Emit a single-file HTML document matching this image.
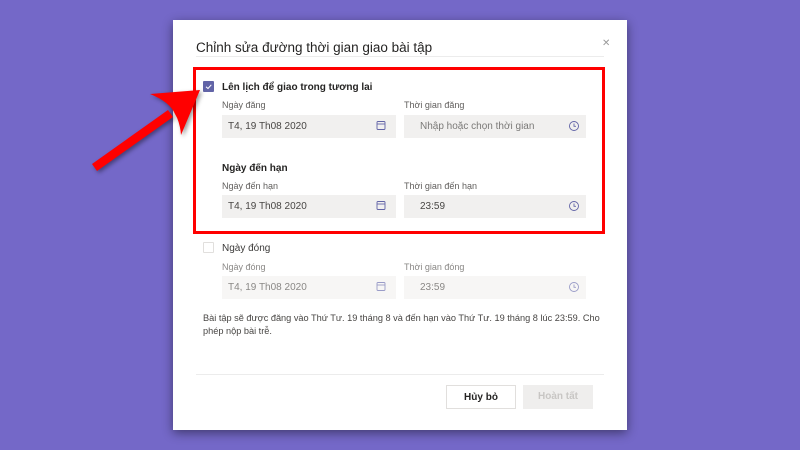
<!DOCTYPE html>
<html><head><meta charset="utf-8"><style>
*{margin:0;padding:0;box-sizing:border-box}
body{width:800px;height:450px;background:#7468c8;position:relative;overflow:hidden;font-family:"Liberation Sans","DejaVu Sans",sans-serif;color:#252423}
.a{position:absolute}
.dlg{left:173px;top:20px;width:454px;height:410px;background:#fff;box-shadow:0 3px 10px rgba(0,0,0,.45)}
.t{font-size:13px;color:#252423;white-space:nowrap}
.lbl{font-size:9px;color:#605e5c;white-space:nowrap}
.inp{background:#f1f0ef;height:23px;font-size:10px;color:#484644;padding:6px 0 0 6px;white-space:nowrap}
.b{font-size:10px;font-weight:bold;white-space:nowrap}
</style></head><body>
<div class="a dlg"></div>
<div class="a t" style="left:196px;top:40px;font-size:13.5px">Chỉnh sửa đường thời gian giao bài tập</div>
<div class="a" style="left:196px;top:56px;width:408px;height:1px;background:#ececec"></div>
<div class="a" style="left:602px;top:38px;font-size:10px;color:#999">✕</div>

<div class="a" style="left:193px;top:67px;width:412px;height:167px;border:3px solid #f00"></div>

<div class="a" style="left:203px;top:81px;width:11px;height:11px;background:#6264a7;border-radius:1px"></div>
<svg class="a" style="left:203px;top:81px" width="11" height="11"><path d="M3 5.7L5 7.5L8.3 3.8" stroke="#fff" stroke-width="1" fill="none"/></svg>
<div class="a b" style="left:222px;top:82px">Lên lịch để giao trong tương lai</div>
<div class="a lbl" style="left:222px;top:100px">Ngày đăng</div>
<div class="a lbl" style="left:404px;top:100px">Thời gian đăng</div>
<div class="a inp" style="left:222px;top:115px;width:174px">T4, 19 Th08 2020</div>
<div class="a inp" style="left:404px;top:115px;width:182px;padding-left:16px;color:#7a7977">Nhập hoặc chọn thời gian</div>

<div class="a b" style="left:222px;top:163px">Ngày đến hạn</div>
<div class="a lbl" style="left:222px;top:181px">Ngày đến hạn</div>
<div class="a lbl" style="left:404px;top:181px">Thời gian đến hạn</div>
<div class="a inp" style="left:222px;top:195px;width:174px">T4, 19 Th08 2020</div>
<div class="a inp" style="left:404px;top:195px;width:182px;padding-left:16px">23:59</div>

<div class="a" style="left:203px;top:242px;width:11px;height:11px;border:1px solid #e1dfdd;border-radius:1px"></div>
<div class="a b" style="left:222px;top:243px;font-weight:normal;color:#3b3a39">Ngày đóng</div>
<div class="a lbl" style="left:222px;top:262px;color:#8a8886">Ngày đóng</div>
<div class="a lbl" style="left:404px;top:262px;color:#8a8886">Thời gian đóng</div>
<div class="a inp" style="left:222px;top:276px;width:174px;background:#f7f6f5;color:#8a8886">T4, 19 Th08 2020</div>
<div class="a inp" style="left:404px;top:276px;width:182px;padding-left:16px;background:#f7f6f5;color:#8a8886">23:59</div>

<div class="a" style="left:203px;top:312px;width:405px;font-size:9.2px;line-height:13px;color:#484644">Bài tập sẽ được đăng vào Thứ Tư. 19 tháng 8 và đến hạn vào Thứ Tư. 19 tháng 8 lúc 23:59. Cho phép nộp bài trễ.</div>

<div class="a" style="left:196px;top:374px;width:408px;height:1px;background:#ececec"></div>
<div class="a b" style="left:446px;top:385px;width:70px;height:24px;border:1px solid #e1dfdd;text-align:center;padding-top:6px">Hủy bỏ</div>
<div class="a b" style="left:523px;top:385px;width:70px;height:24px;background:#efeeed;color:#c8c6c4;text-align:center;padding-top:6px">Hoàn tất</div>

<svg class="a" style="left:0;top:0" width="800" height="450">
<g fill="none" stroke="#6264a7" stroke-width="0.9">
<rect x="377" y="121.5" width="8" height="8" rx="1"/><path d="M377 124h8"/>
<rect x="377" y="201.5" width="8" height="8" rx="1"/><path d="M377 204h8"/>
<rect x="377" y="282.5" width="8" height="8" rx="1" stroke="#9a9cc8"/><path d="M377 285h8" stroke="#9a9cc8"/>
<circle cx="574" cy="126" r="4.5"/><path d="M574 123.5v2.8h2"/>
<circle cx="574" cy="206" r="4.5"/><path d="M574 203.5v2.8h2"/>
<circle cx="574" cy="287" r="4.5" stroke="#9a9cc8"/><path d="M574 284.5v2.8h2" stroke="#9a9cc8"/>
</g>
<g fill="#f00" filter="drop-shadow(2px 2px 2px rgba(0,0,0,.4))">
<path d="M92 164L168 110L173 117L97 171Z"/>
<path d="M200 90L150 94Q170 102 175 114Q180 122 181 135Z"/>
</g>
</svg>
</body></html>
